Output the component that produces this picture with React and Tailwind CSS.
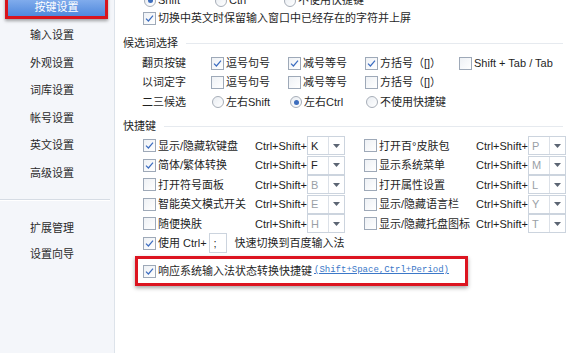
import React from 'react';

// --- BASIC CONTROLS ---
const Check = ({ checked }) => (
    <span className="inline-flex w-[13px] h-[13px] shrink-0 items-center justify-center border border-[#9ea9b8] bg-gradient-to-br from-[#eef1f5] to-white">
        {checked && (
            <svg width="9" height="9" viewBox="0 0 9 9">
                <path d="M1 4.6 L3.4 7 L8 1.6" fill="none" stroke="#3b6cc0" strokeWidth="1.2" />
            </svg>
        )}
    </span>
);

const Radio = ({ checked }) => (
    <span className="inline-flex w-[12px] h-[12px] shrink-0 items-center justify-center rounded-full border border-[#a7aeb8] bg-gradient-to-br from-[#e9edf2] to-white">
        {checked && <span className="w-[5px] h-[5px] rounded-full bg-[#3d6dbd]" />}
    </span>
);

const Opt = ({ w, checked, radio, children }) => (
    <div className="flex items-center gap-[1px] shrink-0" style={{ width: w }}>
        {radio ? <Radio checked={checked} /> : <Check checked={checked} />}
        <span className="pl-[1px] whitespace-nowrap">{children}</span>
    </div>
);

const KeyBox = ({ k, on }) => (
    <div className="flex h-[19px] w-[38px] shrink-0 border border-[#ccd4de] bg-white">
        <span className={`w-[20px] pl-[3px] flex items-center text-[11px] ${on ? 'text-[#222]' : 'text-[#9a9fa6]'}`}>{k}</span>
        <span className="flex-1 border-l border-[#dce1e8] flex items-center justify-center">
            <svg width="7" height="4" viewBox="0 0 7 4">
                <path d="M0 0 L7 0 L3.5 4 Z" fill="#5c6573" />
            </svg>
        </span>
    </div>
);

const Shortcut = ({ label, k, on, wide }) => (
    <div className="flex items-center shrink-0" style={{ width: wide }}>
        <div className="flex items-center w-[112px] shrink-0">
            <Check checked={on} />
            <span className="pl-[2px] whitespace-nowrap">{label}</span>
        </div>
        <span className="w-[52px] shrink-0 whitespace-nowrap">Ctrl+Shift+</span>
        <KeyBox k={k} on={on} />
    </div>
);

const SectionTitle = ({ children, className }) => (
    <div className={`flex items-center h-[20px] pl-[8px] pr-[14px] ${className || ''}`}>
        <span className="whitespace-nowrap">{children}</span>
        <span className="flex-1 ml-[8px] h-px bg-[#e6eaef]" />
    </div>
);

// --- DATA ---
const menu = ['输入设置', '外观设置', '词库设置', '帐号设置', '英文设置', '高级设置'];
const leftKeys = [
    { label: '显示/隐藏软键盘', k: 'K', on: true },
    { label: '简体/繁体转换', k: 'F', on: true },
    { label: '打开符号面板', k: 'B' },
    { label: '智能英文模式开关', k: 'E' },
    { label: '随便换肤', k: 'H' },
];
const rightKeys = [
    { label: '打开百°皮肤包', k: 'P' },
    { label: '显示系统菜单', k: 'M' },
    { label: '打开属性设置', k: 'L' },
    { label: '显示/隐藏语言栏', k: 'Y' },
    { label: '显示/隐藏托盘图标', k: 'T' },
];

export default function App() {
    return (
        <div className="w-[577px] h-[353px] flex overflow-hidden bg-white text-[11px] text-[#1f1f1f] font-['Liberation_Sans','Noto_Sans_CJK_SC',sans-serif]">
            {/* --- SIDEBAR --- */}
            <div className="w-[115px] shrink-0 bg-[#f4f6fa] border-r border-[#dde3ea] flex flex-col mt-[-6px] text-[#2a2a2a]">
                <div className="h-[27.5px] flex items-start pt-[1px]">
                    <div className="ml-[5px] w-[103px] h-[24px] border-[3px] border-[#d8141d] shadow-[0_2px_3px_rgba(0,0,0,0.35)] bg-gradient-to-b from-[#86b0ee] to-[#4f88dc] flex items-center justify-center text-white">
                        按键设置
                    </div>
                </div>
                {menu.map((m) => (
                    <div key={m} className="h-[27.5px] flex items-center justify-center pr-[10px]">{m}</div>
                ))}
                <div className="h-[27.5px] flex items-center">
                    <div className="w-[110px] border-t border-[#d6dce4] border-b border-b-white" />
                </div>
                <div className="h-[27.5px] flex items-center justify-center pr-[10px]">扩展管理</div>
                <div className="h-[25px] flex items-center justify-center pr-[10px]">设置向导</div>
            </div>

            {/* --- MAIN PANEL --- */}
            <div className="flex-1 flex flex-col mt-[-9px]">
                <div className="h-[19px] flex items-center pl-[29px]">
                    <Opt w="71px" radio checked>Shift</Opt>
                    <Opt w="69px" radio>Ctrl</Opt>
                    <Opt w="160px" radio>不使用快捷键</Opt>
                </div>
                <div className="h-[17px] flex items-center pl-[28px]">
                    <Opt w="300px" checked>切换中英文时保留输入窗口中已经存在的字符并上屏</Opt>
                </div>

                <SectionTitle className="mt-[6px] h-[19px]">候选词选择</SectionTitle>
                <div className="h-[20px] flex items-center pl-[27px]">
                    <span className="w-[69px] shrink-0">翻页按键</span>
                    <Opt w="77px" checked>逗号句号</Opt>
                    <Opt w="77px" checked>减号等号</Opt>
                    <Opt w="94px" checked>方括号（[]）</Opt>
                    <Opt w="110px">Shift + Tab / Tab</Opt>
                </div>
                <div className="h-[19px] flex items-center pl-[27px]">
                    <span className="w-[69px] shrink-0">以词定字</span>
                    <Opt w="77px">逗号句号</Opt>
                    <Opt w="77px">减号等号</Opt>
                    <Opt w="94px">方括号（[]）</Opt>
                </div>
                <div className="h-[20px] flex items-center pl-[27px]">
                    <span className="w-[70px] shrink-0">二三候选</span>
                    <Opt w="78px" radio>左右Shift</Opt>
                    <Opt w="76px" radio checked>左右Ctrl</Opt>
                    <Opt w="110px" radio>不使用快捷键</Opt>
                </div>

                <SectionTitle className="mt-[4px]">快捷键</SectionTitle>
                <div className="flex flex-col pl-[28px]">
                    {leftKeys.map((l, i) => (
                        <div key={l.k} className="h-[19.5px] flex items-center">
                            <Shortcut {...l} wide="221px" />
                            <Shortcut {...rightKeys[i]} wide="202px" />
                        </div>
                    ))}
                    <div className="h-[19.5px] flex items-center">
                        <Check checked />
                        <span className="pl-[2px] whitespace-nowrap">使用 Ctrl+</span>
                        <span className="ml-[2px] w-[18px] h-[20px] border border-[#ccd4de] bg-white flex items-center pl-[4px]">;</span>
                        <span className="ml-[8px] whitespace-nowrap">快速切换到百度输入法</span>
                    </div>
                </div>

                <div className="mt-[3px] ml-[20px] w-[333px] h-[30px] border-[3px] border-[#dc1420] shadow-[0_2px_4px_rgba(0,0,0,0.35)] flex items-center pl-[5px]">
                    <Check checked />
                    <span className="pl-[2px] whitespace-nowrap">响应系统输入法状态转换快捷键</span>
                    <span className="ml-[2px] whitespace-nowrap underline text-[#3c78c8] text-[9px] font-['Liberation_Mono',monospace]">(Shift+Space,Ctrl+Period)</span>
                </div>
            </div>
        </div>
    );
}
